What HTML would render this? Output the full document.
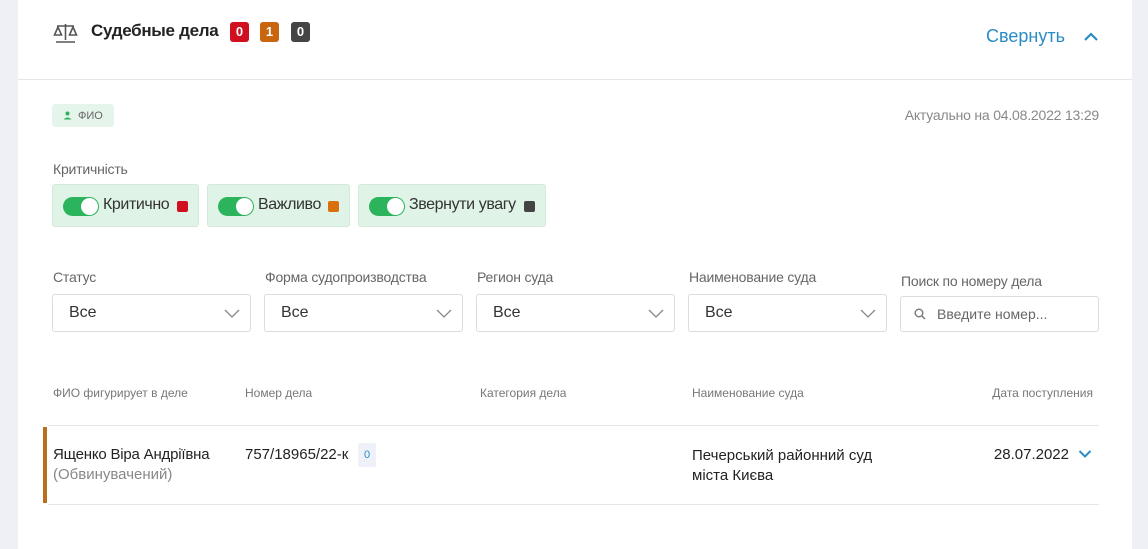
<!DOCTYPE html>
<html><head><meta charset="utf-8"><style>
*{box-sizing:border-box;margin:0;padding:0}
body{width:1148px;height:549px;background:#eef0f5;font-family:"Liberation Sans",sans-serif;position:relative;overflow:hidden;color:#333}
.p{position:absolute;left:18px;top:0;width:1114px;height:549px;background:#fff}
.a{position:absolute;white-space:nowrap}
.badge{position:absolute;top:22px;width:19px;height:20px;border-radius:3px;color:#fff;font-size:13px;font-weight:bold;text-align:center;line-height:20px}
.lbl{font-size:14px;color:#666;letter-spacing:-0.2px}
.sel{position:absolute;top:294px;width:199px;height:38px;border:1px solid #dcdcdc;border-radius:3px;font-size:16px;color:#333;padding:9px 16px}
.sel svg{position:absolute;right:10px;top:13px}
.tg{position:absolute;top:184px;height:43px;background:#dff3e6;border:1px solid #d3ead9;border-radius:3px}
.sw{position:absolute;left:10px;top:12px;width:36px;height:19px;border-radius:10px;background:#2bb45b}
.sw:after{content:"";position:absolute;right:1px;top:1px;width:17px;height:17px;border-radius:50%;background:#fff}
.tg span{position:absolute;top:11px;font-size:16px;color:#333;letter-spacing:-0.4px}
.sq{position:absolute;top:16px;width:11px;height:11px;border-radius:2px}
.th{font-size:12px;color:#777;top:386px}
</style></head><body>
<div class="p"></div>
<svg class="a" style="left:53px;top:22px" width="25" height="22" viewBox="0 0 25 22" fill="none" stroke="#555" stroke-width="1.6"><line x1="12.5" y1="2" x2="12.5" y2="18"/><line x1="3" y1="20" x2="22" y2="20"/><line x1="4" y1="4" x2="21" y2="4"/><path d="M5 5 L1.5 13 H8.5 Z"/><path d="M20 5 L16.5 13 H23.5 Z"/></svg>
<div class="a" style="left:91px;top:21px;font-size:17px;font-weight:bold;color:#222;letter-spacing:-0.3px">Судебные дела</div>
<div class="badge" style="left:230px;background:#d0101f">0</div>
<div class="badge" style="left:260px;background:#c8650e">1</div>
<div class="badge" style="left:291px;background:#444">0</div>
<div class="a" style="right:83px;top:26px;font-size:18px;color:#2a8cc4">Свернуть</div>
<svg class="a" style="left:1083px;top:31px" width="16" height="12" viewBox="0 0 16 12"><path d="M2 9 L8 3 L14 9" stroke="#2a8cc4" stroke-width="2.2" fill="none"/></svg>
<div class="a" style="left:18px;top:79px;width:1114px;height:1px;background:#e6e6e6"></div>
<div class="a" style="left:52px;top:104px;width:62px;height:23px;background:#e6f5ec;border-radius:3px"></div>
<svg class="a" style="left:63px;top:111px" width="9" height="9" viewBox="0 0 9 9" fill="#2bb45b"><circle cx="4.5" cy="2.5" r="2"/><path d="M0.5 8.5 Q4.5 4.5 8.5 8.5 Z"/></svg>
<div class="a" style="left:78px;top:110px;font-size:11px;color:#666">ФИО</div>
<div class="a lbl" style="right:49px;top:107px;color:#888">Актуально на 04.08.2022 13:29</div>
<div class="a lbl" style="left:53px;top:161px">Критичність</div>
<div class="tg" style="left:52px;width:147px"><div class="sw"></div><span style="left:50px">Критично</span><div class="sq" style="left:124px;background:#d0101f"></div></div>
<div class="tg" style="left:207px;width:143px"><div class="sw"></div><span style="left:50px">Важливо</span><div class="sq" style="left:120px;background:#d9700e"></div></div>
<div class="tg" style="left:358px;width:188px"><div class="sw"></div><span style="left:50px">Звернути увагу</span><div class="sq" style="left:165px;background:#444"></div></div>
<div class="a lbl" style="left:53px;top:269px">Статус</div>
<div class="a lbl" style="left:265px;top:269px">Форма судопроизводства</div>
<div class="a lbl" style="left:477px;top:269px">Регион суда</div>
<div class="a lbl" style="left:689px;top:269px">Наименование суда</div>
<div class="a lbl" style="left:901px;top:273px">Поиск по номеру дела</div>
<div class="sel" style="left:52px">Все<svg width="16" height="10" viewBox="0 0 16 10"><path d="M1 2 L8 9 L15 2" stroke="#888" stroke-width="1.3" fill="none"/></svg></div>
<div class="sel" style="left:264px">Все<svg width="16" height="10" viewBox="0 0 16 10"><path d="M1 2 L8 9 L15 2" stroke="#888" stroke-width="1.3" fill="none"/></svg></div>
<div class="sel" style="left:476px">Все<svg width="16" height="10" viewBox="0 0 16 10"><path d="M1 2 L8 9 L15 2" stroke="#888" stroke-width="1.3" fill="none"/></svg></div>
<div class="sel" style="left:688px">Все<svg width="16" height="10" viewBox="0 0 16 10"><path d="M1 2 L8 9 L15 2" stroke="#888" stroke-width="1.3" fill="none"/></svg></div>
<div class="a" style="left:900px;top:296px;width:199px;height:36px;border:1px solid #dcdcdc;border-radius:3px"></div>
<svg class="a" style="left:914px;top:308px" width="12" height="12" viewBox="0 0 12 12" fill="none" stroke="#777" stroke-width="1.4"><circle cx="5" cy="5" r="3.8"/><line x1="8" y1="8" x2="11" y2="11"/></svg>
<div class="a" style="left:937px;top:306px;font-size:14px;color:#666">Введите номер...</div>
<div class="a th" style="left:53px">ФИО фигурирует в деле</div>
<div class="a th" style="left:245px">Номер дела</div>
<div class="a th" style="left:480px">Категория дела</div>
<div class="a th" style="left:692px">Наименование суда</div>
<div class="a th" style="right:55px">Дата поступления</div>
<div class="a" style="left:48px;top:425px;width:1051px;height:1px;background:#e6e6e6"></div>
<div class="a" style="left:48px;top:504px;width:1051px;height:1px;background:#e6e6e6"></div>
<div class="a" style="left:43px;top:427px;width:4px;height:76px;background:#b86e1c"></div>
<div class="a" style="left:53px;top:446px;font-size:15px;color:#222;letter-spacing:-0.2px">Ященко Віра Андріївна</div>
<div class="a" style="left:53px;top:466px;font-size:15px;color:#888">(Обвинувачений)</div>
<div class="a" style="left:245px;top:446px;font-size:15px;color:#222">757/18965/22-к</div>
<div class="a" style="left:358px;top:443px;width:18px;height:24px;background:#eef2f8;border-radius:2px;font-size:11px;color:#2a8cc4;text-align:center;line-height:24px">0</div>
<div class="a" style="left:692px;top:446px;font-size:15px;color:#222;line-height:20px">Печерський районний суд<br>міста Києва</div>
<div class="a" style="right:79px;top:446px;font-size:15px;color:#222">28.07.2022</div>
<svg class="a" style="left:1078px;top:449px" width="14" height="10" viewBox="0 0 14 10"><path d="M1.5 2 L7 7.5 L12.5 2" stroke="#2a8cc4" stroke-width="2" fill="none"/></svg>
</body></html>
